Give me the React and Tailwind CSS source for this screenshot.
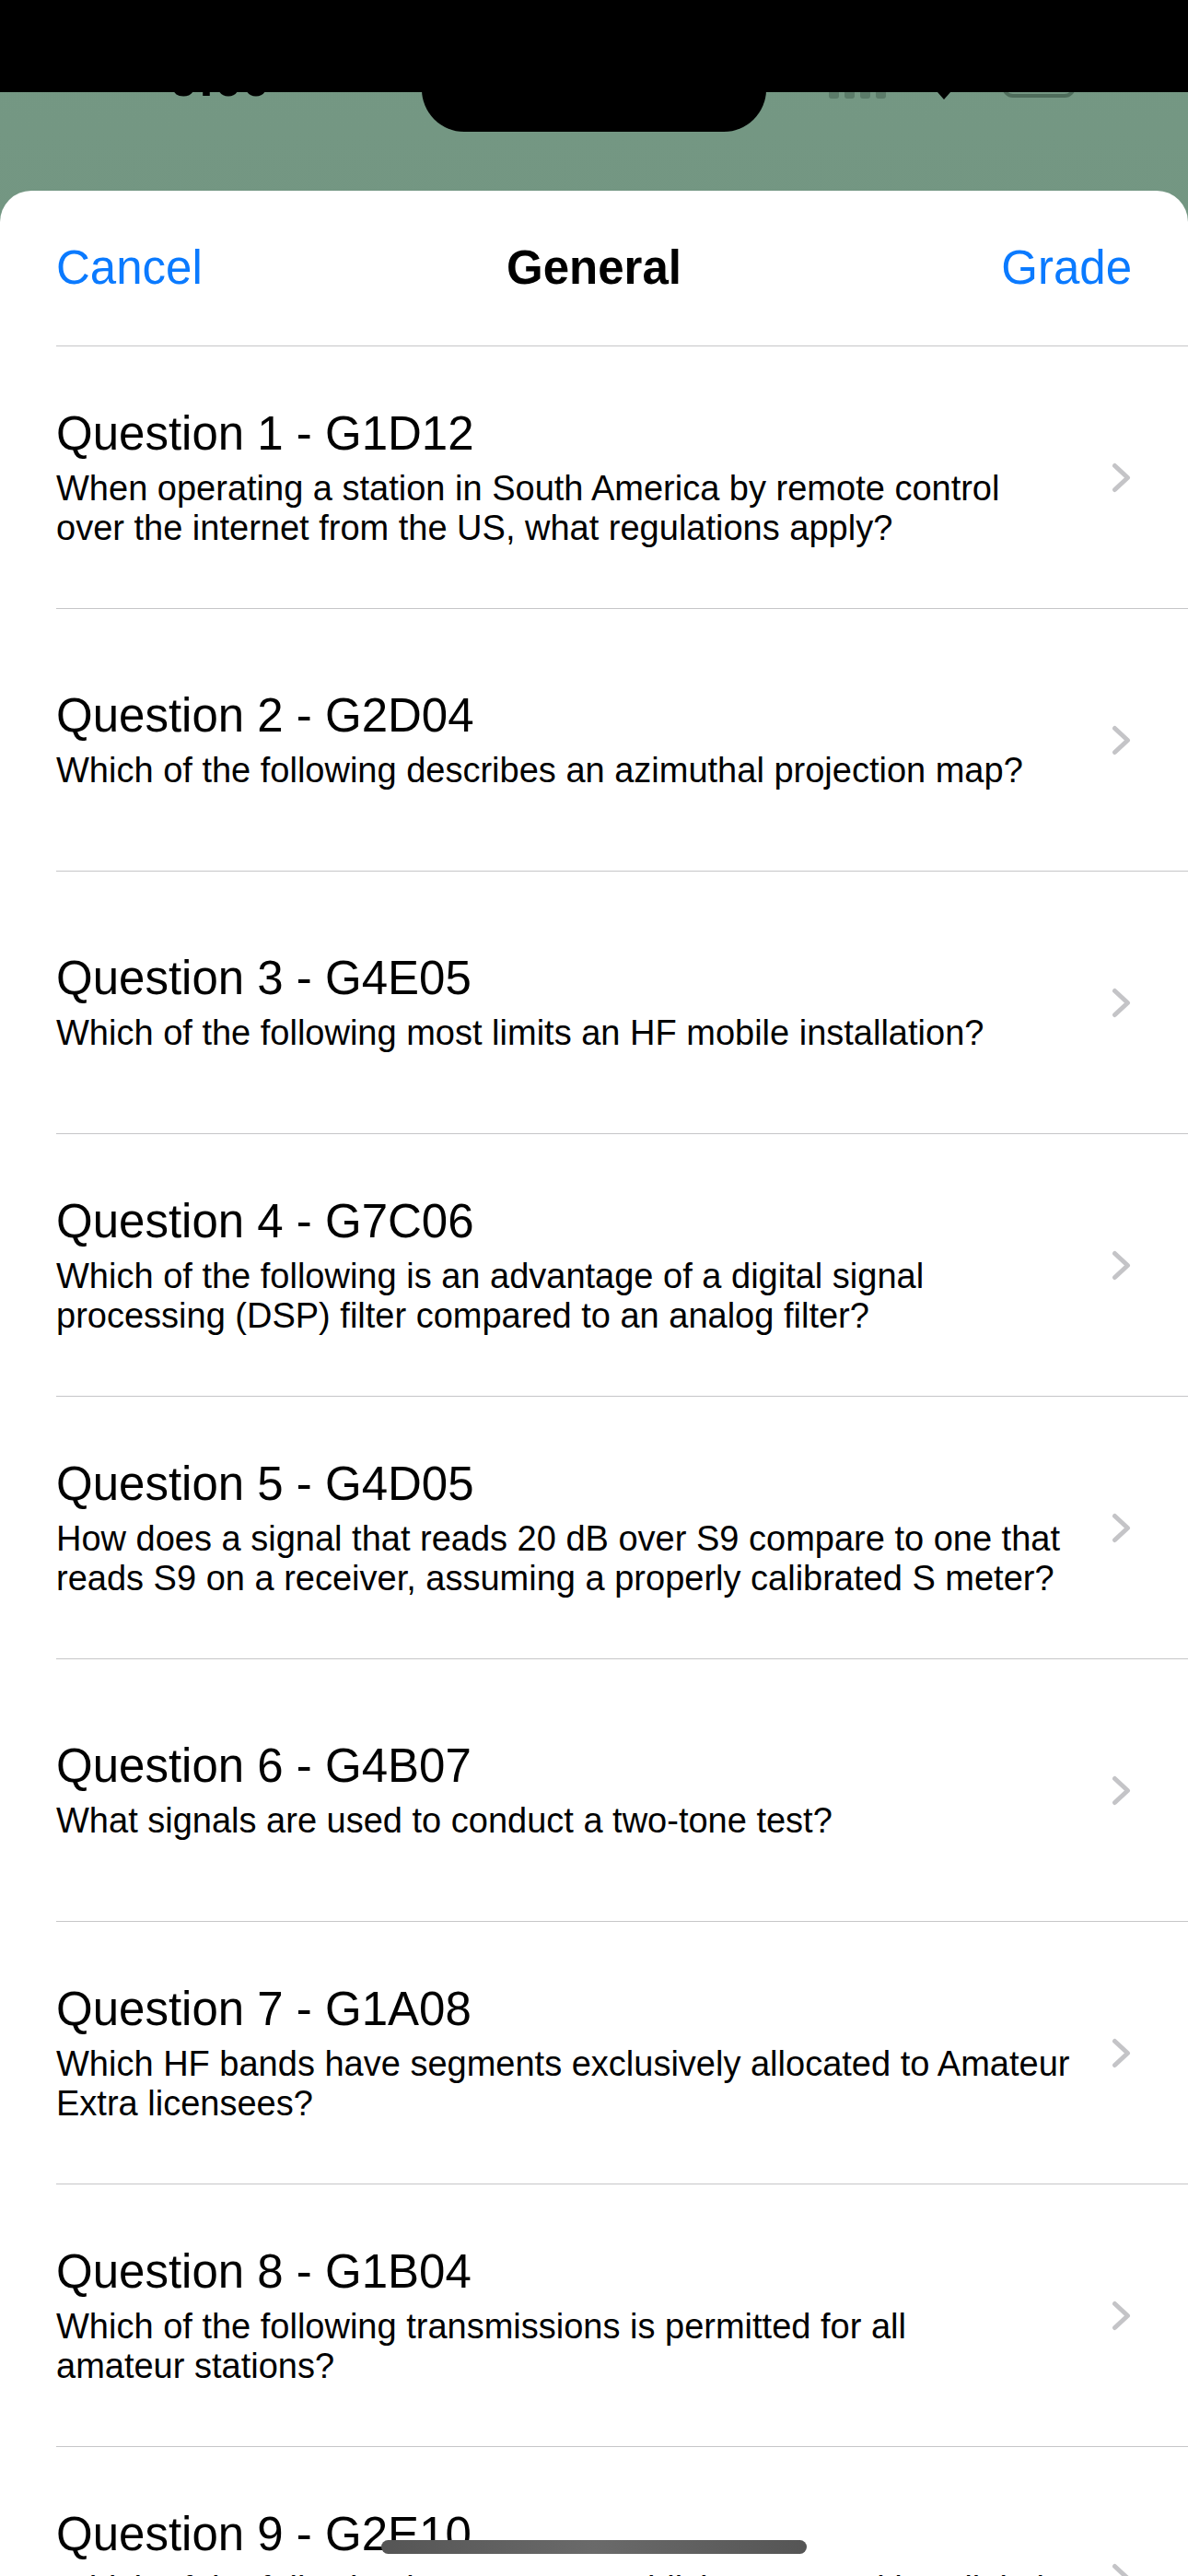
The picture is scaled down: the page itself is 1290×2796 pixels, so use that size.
import React from 'react';

// questions in the practice exam sheet
const questions = [
  {
    n: 1,
    id: 'G1D12',
    lines: [
      'When operating a station in South America by remote control',
      'over the internet from the US, what regulations apply?',
    ],
  },
  { n: 2, id: 'G2D04', lines: ['Which of the following describes an azimuthal projection map?'] },
  { n: 3, id: 'G4E05', lines: ['Which of the following most limits an HF mobile installation?'] },
  {
    n: 4,
    id: 'G7C06',
    lines: [
      'Which of the following is an advantage of a digital signal',
      'processing (DSP) filter compared to an analog filter?',
    ],
  },
  {
    n: 5,
    id: 'G4D05',
    lines: [
      'How does a signal that reads 20 dB over S9 compare to one that',
      'reads S9 on a receiver, assuming a properly calibrated S meter?',
    ],
  },
  { n: 6, id: 'G4B07', lines: ['What signals are used to conduct a two-tone test?'] },
  {
    n: 7,
    id: 'G1A08',
    lines: [
      'Which HF bands have segments exclusively allocated to Amateur',
      'Extra licensees?',
    ],
  },
  {
    n: 8,
    id: 'G1B04',
    lines: [
      'Which of the following transmissions is permitted for all',
      'amateur stations?',
    ],
  },
  {
    n: 9,
    id: 'G2E10',
    lines: [
      'Which of the following is a way to establish contact with a digital',
      'messaging system gateway station?',
    ],
  },
];

function Chevron() {
  return (
    <svg width="21" height="33" viewBox="0 0 21 33" fill="none" className="shrink-0">
      <path
        d="M3.5 3.5 L17.5 16.5 L3.5 29.5"
        stroke="#c4c4c7"
        strokeWidth="5"
        strokeLinecap="round"
        strokeLinejoin="round"
      />
    </svg>
  );
}

function QuestionRow({ q }) {
  return (
    <div className="h-[285px] border-t border-[#c6c6c8] flex items-center pr-[62px]">
      <div className="flex-1 min-w-0">
        <div className="text-[51px] leading-[58px] text-black">
          Question {q.n} - {q.id}
        </div>
        <div className="mt-[9px] text-[38px] leading-[43px] text-black">
          {q.lines.map((l) => (
            <div key={l} className="whitespace-nowrap">
              {l}
            </div>
          ))}
        </div>
      </div>
      <Chevron />
    </div>
  );
}

export default function App() {
  return (
    <div
      className="relative w-[1290px] h-[2796px] overflow-hidden flex flex-col bg-gradient-to-b from-[#759884] to-[#62846f]"
      style={{ fontFamily: '"Liberation Sans", Arial, sans-serif' }}
    >
      {/* status bar (mostly hidden under the black strip) */}
      <div className="relative h-[207px] shrink-0">
        <div className="flex items-start justify-between pl-[185px] pr-[122px]">
          <div className="mt-[58px] text-[54px] leading-none font-bold text-black">9:00</div>
          <div className="flex items-end gap-[38px] mt-[64px]">
            <div className="flex items-end gap-[6px]">
              <div className="w-[11px] h-[14px] rounded-[3px] bg-[#5b7b69]" />
              <div className="w-[11px] h-[20px] rounded-[3px] bg-[#5b7b69]" />
              <div className="w-[11px] h-[28px] rounded-[3px] bg-[#5b7b69]" />
              <div className="w-[11px] h-[36px] rounded-[3px] bg-[#5b7b69]" />
            </div>
            <svg width="50" height="44" viewBox="0 0 50 44" className="mb-[-1px]">
              <path d="M25 44 L2 18 A34 34 0 0 1 48 18 Z" fill="#000" />
            </svg>
            <div className="w-[80px] h-[40px] rounded-[12px] border-[4px] border-[#4f6d5c] mb-[1px]" />
          </div>
        </div>
        <div className="absolute left-0 top-0 w-full h-[100px] bg-black" />
        <div className="absolute left-[458px] top-0 w-[374px] h-[143px] rounded-b-[46px] bg-black" />
      </div>

      {/* sheet */}
      <div className="flex-1 bg-white rounded-t-[34px]">
        <div className="h-[168px] grid grid-cols-[1fr_auto_1fr] items-center px-[61px] text-[51px]">
          <div className="text-[#0a7aff]">Cancel</div>
          <div className="font-semibold text-black">General</div>
          <div className="text-[#0a7aff] text-right">Grade</div>
        </div>
        <div className="ml-[61px]">
          {questions.map((q) => (
            <QuestionRow key={q.n} q={q} />
          ))}
        </div>
      </div>

      {/* home indicator */}
      <div className="absolute left-[414px] top-[2757px] w-[462px] h-[15px] rounded-full bg-gradient-to-r from-[#555555] via-[#6a6a6a] to-[#555555]" />
    </div>
  );
}
